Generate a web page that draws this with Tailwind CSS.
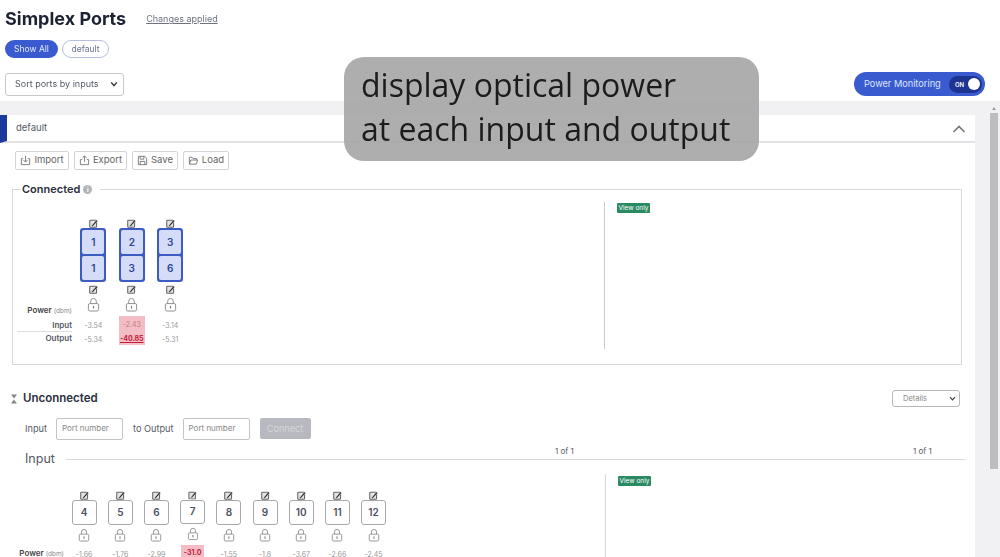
<!DOCTYPE html>
<html lang="en">
<head>
    <meta charset="UTF-8">
    <title>Simplex Ports</title>
    <script src="https://cdn.jsdelivr.net/npm/@tailwindcss/browser@4"></script>
</head>
<body class="bg-white overflow-hidden antialiased">
    <svg class="hidden">
        <symbol id="edit" viewBox="0 0 10 10">
            <rect x=".8" y="1.4" width="7.6" height="7.8" rx=".8" fill="#e4e4e4" stroke="#666" stroke-width="1.2"/>
            <path d="M3 7.200 L8.200 1 L9.700 2.300 L4.400 8 L2.800 8.300 Z" fill="#333" stroke="#fff" stroke-width=".4"/>
        </symbol>
        <symbol id="lock" viewBox="0 0 14 16">
            <path d="M4 7V4.500a3 3 0 0 1 6 0V7" fill="none" stroke="#888" stroke-width="1"/>
            <rect x="1.500" y="7" width="11" height="8" rx="1.500" fill="#fff" stroke="#888" stroke-width="1"/>
            <rect x="6.400" y="9.600" width="1.200" height="2.800" fill="#777"/>
        </symbol>
    </svg>

    <div class="relative w-[1000px] h-[557px] overflow-hidden flex flex-col font-['Inter',sans-serif] text-[#555a66] blur-[0.5px]">
        <!-- page header -->
        <header class="h-[101px] shrink-0 pl-[5px] pr-[15px]">
            <div class="flex items-center gap-5 pt-[4px] pb-[6px] h-[40px]">
                <h1 class="text-[18px] leading-[24px] font-bold text-[#1d2233]">Simplex Ports</h1>
                <a class="text-[9px] underline text-[#6c7282]">Changes applied</a>
            </div>
            <div class="flex gap-[4px] h-[18px]">
                <span class="w-[53px] rounded-full bg-[#3a5bd0] text-[#e4e9fb] text-[8.500px] flex items-center justify-center">Show All</span>
                <span class="w-[47px] rounded-full border border-[#b4bde0] text-[#6a7290] text-[8.500px] flex items-center justify-center">default</span>
            </div>
            <div class="flex items-center justify-between mt-[14px]">
                <div class="w-[119px] h-[23px] border border-[#c8c8cc] rounded-[3px] flex items-center justify-between pl-[9px] pr-[5px] text-[9px]">
                    Sort ports by inputs
                    <svg class="w-[8px] h-[8px]" viewBox="0 0 10 10"><path d="M1.500 3 L5 7 L8.500 3" fill="none" stroke="#333" stroke-width="1.800"/></svg>
                </div>
                <div class="w-[131px] h-[24px] rounded-full bg-[#3a5bd0] flex items-center justify-between pl-[10px] pr-[3px] text-[9.200px] text-[#dfe5fa]">
                    Power Monitoring
                    <span class="w-[33px] h-[17px] rounded-full bg-[#1d3590] flex items-center justify-between pl-[6px] pr-[2px] text-[6px] font-semibold text-white">ON<span class="w-[12px] h-[12px] rounded-full bg-white"></span></span>
                </div>
            </div>
        </header>

        <div class="flex-1 flex bg-[#f1f1f4] pt-[14px] min-h-0">
            <main class="w-[975px] shrink-0 bg-white">
                <div class="h-[28px] flex items-center justify-between border-b-2 border-[#e2e2e6] border-l-[7px] border-l-[#1c3a9e] pl-[9px] pr-[9px] pt-[1px] text-[9.500px]">
                    default
                    <svg class="w-[14px] h-[14px]" viewBox="0 0 14 14"><path d="M1.500 10 L7 4.500 L12.500 10" fill="none" stroke="#777" stroke-width="1.600"/></svg>
                </div>

                <div class="flex gap-[5px] pl-[15px] pt-[8px] text-[9.500px] text-[#666]">
                    <button class="w-[54px] h-[19px] border border-[#d4d4d8] rounded-[2px] flex items-center justify-center gap-[3px]">
                        <svg class="w-[11px] h-[11px]" viewBox="0 0 12 12" fill="none" stroke="#777"><path d="M6 1v6.500M3.800 5.500 6 7.800l2.200-2.300M3.500 4H1.500v6.500h9V4H8.500"/></svg>Import
                    </button>
                    <button class="w-[53px] h-[19px] border border-[#d4d4d8] rounded-[2px] flex items-center justify-center gap-[3px]">
                        <svg class="w-[11px] h-[11px]" viewBox="0 0 12 12" fill="none" stroke="#777"><path d="M6 7.500V1M3.800 3.200 6 1l2.200 2.200M3.500 5H1.500v5.500h9V5H8.500"/></svg>Export
                    </button>
                    <button class="w-[46px] h-[19px] border border-[#d4d4d8] rounded-[2px] flex items-center justify-center gap-[3px]">
                        <svg class="w-[11px] h-[11px]" viewBox="0 0 12 12" fill="none" stroke="#777"><path d="M1.500 1.500h7l2 2v7h-9zM3.500 1.500v3h4v-3M3.500 10.500v-3.500h5v3.500"/></svg>Save
                    </button>
                    <button class="w-[46px] h-[19px] border border-[#d4d4d8] rounded-[2px] flex items-center justify-center gap-[3px]">
                        <svg class="w-[11px] h-[11px]" viewBox="0 0 12 12" fill="none" stroke="#777"><path d="M1.500 10V2.500h3l1 1.500h4v1.500M1.500 10h7.500l1.500-4.500H3z"/></svg>Load
                    </button>
                </div>

                <!-- connected ports -->
                <fieldset class="ml-[12px] mt-[11px] w-[950px] h-[184px] border border-[#d8d8dc] flex">
                    <legend class="ml-[8px] px-[1px] pr-[8px] flex items-center gap-[3px] text-[11px] leading-[16px] font-semibold text-[#2a2f3d]">
                        Connected
                        <span class="w-[9px] h-[9px] rounded-full bg-[#b4b4b8] text-white text-[6px] leading-[9px] text-center font-bold">i</span>
                    </legend>
                    <div class="w-[592px] h-[147px] mt-[5px] border-r border-[#c8c8cc] flex text-[7px]">
                        <div class="w-[59px] shrink-0 pt-[101px] pl-[4px] text-right font-semibold text-[#555a66] text-[8px]">
                            <div class="h-[14px] leading-[14px] text-[#444]">Power <span class="font-normal text-[6.500px] text-[#888]">(dbm)</span></div>
                            <div class="h-[12px] mt-[2px] leading-[13px]">Input</div>
                            <div class="h-[14px] leading-[12px] border-t border-[#ddd]">Output</div>
                        </div>
                        <div class="w-[2px] shrink-0"></div>
                        <div class="w-[38.500px] flex flex-col items-center pt-[17px] text-[#999]">
                            <svg class="w-[9px] h-[9px]"><use href="#edit"/></svg>
                            <div class="w-[26px] h-[54px] flex flex-col rounded-[3px] border-2 border-[#3c5cc4] bg-[#3c5cc4] gap-[2px] text-[10px] font-semibold text-[#2c4596]">
                                <span class="flex-1 bg-[#d4dcf8] rounded-[2px] flex items-center justify-center">1</span>
                                <span class="flex-1 bg-[#d4dcf8] rounded-[2px] flex items-center justify-center">1</span>
                            </div>
                            <svg class="w-[9px] h-[9px] mt-[3px]"><use href="#edit"/></svg>
                            <svg class="w-[13px] h-[15px] mt-[3px]"><use href="#lock"/></svg>
                            <span class="h-[15px] mt-[6px] leading-[15px]">-3.54</span>
                            <span class="h-[13px] leading-[13px]">-5.34</span>
                        </div>
                        <div class="w-[38.500px] flex flex-col items-center pt-[17px] text-[#999]">
                            <svg class="w-[9px] h-[9px]"><use href="#edit"/></svg>
                            <div class="w-[26px] h-[54px] flex flex-col rounded-[3px] border-2 border-[#3c5cc4] bg-[#3c5cc4] gap-[2px] text-[10px] font-semibold text-[#2c4596]">
                                <span class="flex-1 bg-[#d4dcf8] rounded-[2px] flex items-center justify-center">2</span>
                                <span class="flex-1 bg-[#d4dcf8] rounded-[2px] flex items-center justify-center">3</span>
                            </div>
                            <svg class="w-[9px] h-[9px] mt-[3px]"><use href="#edit"/></svg>
                            <svg class="w-[13px] h-[15px] mt-[3px]"><use href="#lock"/></svg>
                            <div class="w-[26px] h-[29px] mt-[4px] bg-[#f4bcc4] flex flex-col items-center">
                                <span class="h-[16px] leading-[18px] text-[#c08088]">-2.43</span>
                                <span class="h-[13px] leading-[13px] font-bold underline text-[#c02040]">-40.85</span>
                            </div>
                        </div>
                        <div class="w-[38.500px] flex flex-col items-center pt-[17px] text-[#999]">
                            <svg class="w-[9px] h-[9px]"><use href="#edit"/></svg>
                            <div class="w-[26px] h-[54px] flex flex-col rounded-[3px] border-2 border-[#3c5cc4] bg-[#3c5cc4] gap-[2px] text-[10px] font-semibold text-[#2c4596]">
                                <span class="flex-1 bg-[#d4dcf8] rounded-[2px] flex items-center justify-center">3</span>
                                <span class="flex-1 bg-[#d4dcf8] rounded-[2px] flex items-center justify-center">6</span>
                            </div>
                            <svg class="w-[9px] h-[9px] mt-[3px]"><use href="#edit"/></svg>
                            <svg class="w-[13px] h-[15px] mt-[3px]"><use href="#lock"/></svg>
                            <span class="h-[15px] mt-[6px] leading-[15px]">-3.14</span>
                            <span class="h-[13px] leading-[13px]">-5.31</span>
                        </div>
                    </div>
                    <div class="pl-[12px] pt-[6px]">
                        <span class="block w-[33px] h-[10px] rounded-[1px] bg-[#2a8a62] text-white text-[6.500px] leading-[10px] text-center">View only</span>
                    </div>
                </fieldset>

                <!-- unconnected ports -->
                <div class="flex items-center justify-between h-[17px] mt-[25px] pl-[10px] pr-[15px]">
                    <div class="flex items-center gap-[5px] pt-[1px] text-[11.500px] font-semibold text-[#2a2f3d]">
                        <svg class="w-[8px] h-[10px]" viewBox="0 0 8 10"><path d="M1 .5h6L4 4.500zM1 9.500h6L4 5.500z" fill="#888"/></svg>
                        Unconnected
                    </div>
                    <div class="w-[68px] h-[17px] border border-[#b8b8bc] rounded-[3px] flex items-center justify-between pl-[10px] pr-[3px] text-[7.500px] text-[#888]">
                        Details
                        <svg class="w-[7px] h-[7px]" viewBox="0 0 10 10"><path d="M1.500 3 L5 7 L8.500 3" fill="none" stroke="#444" stroke-width="1.800"/></svg>
                    </div>
                </div>
                <div class="flex items-center h-[22px] mt-[11px] pl-[25px] text-[9.200px]">
                    Input
                    <div class="w-[67px] h-[22px] ml-[9px] border border-[#c4c4c8] rounded-[2px] pl-[5px] leading-[19px] text-[8px] text-[#888]">Port number</div>
                    <span class="ml-[10px]">to Output</span>
                    <div class="w-[67px] h-[22px] ml-[9px] border border-[#c4c4c8] rounded-[2px] pl-[5px] leading-[19px] text-[8px] text-[#888]">Port number</div>
                    <span class="w-[51px] h-[21px] ml-[10px] -mt-[1px] rounded-[2px] bg-[#b8b9c0] text-[#d4d5da] flex items-center justify-center">Connect</span>
                </div>
                <div class="relative flex items-center h-[20px] mt-[9px] pl-[25px] text-[12.500px]">
                    Input
                    <div class="ml-[11px] w-[899px] h-px bg-[#d8d8dc]"></div>
                    <span class="absolute left-[555px] -top-[3px] text-[8px] leading-[10px]">1 of 1</span>
                    <span class="absolute left-[913px] -top-[3px] text-[8px] leading-[10px]">1 of 1</span>
                </div>
                <div class="flex h-[90px] mt-[5px] text-[7px] text-[#999]">
                    <div class="w-[606px] border-r border-[#d8d8dc] flex">
                        <div class="w-[66px] shrink-0 pt-[73px] pr-[2px] text-right text-[8px] font-semibold text-[#444] leading-[12px]">Power <span class="font-normal text-[6.500px] text-[#888]">(dbm)</span></div>
                        <div class="w-[36.200px] flex flex-col items-center pt-[17px]">
                            <svg class="w-[9px] h-[9px]"><use href="#edit"/></svg>
                            <span class="w-[25px] h-[25px] border border-[#a8a8ac] rounded-[3px] flex items-center justify-center text-[10px] font-semibold text-[#4a5060]">4</span>
                            <svg class="w-[12px] h-[14px] mt-[3px]"><use href="#lock"/></svg>
                            <span class="h-[14px] mt-[6px] leading-[14px]">-1.66</span>
                        </div>
                        <div class="w-[36.200px] flex flex-col items-center pt-[17px]">
                            <svg class="w-[9px] h-[9px]"><use href="#edit"/></svg>
                            <span class="w-[25px] h-[25px] border border-[#a8a8ac] rounded-[3px] flex items-center justify-center text-[10px] font-semibold text-[#4a5060]">5</span>
                            <svg class="w-[12px] h-[14px] mt-[3px]"><use href="#lock"/></svg>
                            <span class="h-[14px] mt-[6px] leading-[14px]">-1.76</span>
                        </div>
                        <div class="w-[36.200px] flex flex-col items-center pt-[17px]">
                            <svg class="w-[9px] h-[9px]"><use href="#edit"/></svg>
                            <span class="w-[25px] h-[25px] border border-[#a8a8ac] rounded-[3px] flex items-center justify-center text-[10px] font-semibold text-[#4a5060]">6</span>
                            <svg class="w-[12px] h-[14px] mt-[3px]"><use href="#lock"/></svg>
                            <span class="h-[14px] mt-[6px] leading-[14px]">-2.99</span>
                        </div>
                        <div class="w-[36.200px] flex flex-col items-center pt-[17px]">
                            <svg class="w-[9px] h-[9px]"><use href="#edit"/></svg>
                            <span class="w-[25px] h-[25px] border border-[#a8a8ac] rounded-[3px] flex items-center justify-center text-[10px] font-semibold text-[#4a5060]">7</span>
                            <svg class="w-[12px] h-[14px] mt-[3px]"><use href="#lock"/></svg>
                            <span class="w-[23px] h-[20px] mt-[5px] bg-[#f4bcc4] text-center pt-[1px] leading-[14px] font-bold text-[#c02040]">-31.0</span>
                        </div>
                        <div class="w-[36.200px] flex flex-col items-center pt-[17px]">
                            <svg class="w-[9px] h-[9px]"><use href="#edit"/></svg>
                            <span class="w-[25px] h-[25px] border border-[#a8a8ac] rounded-[3px] flex items-center justify-center text-[10px] font-semibold text-[#4a5060]">8</span>
                            <svg class="w-[12px] h-[14px] mt-[3px]"><use href="#lock"/></svg>
                            <span class="h-[14px] mt-[6px] leading-[14px]">-1.55</span>
                        </div>
                        <div class="w-[36.200px] flex flex-col items-center pt-[17px]">
                            <svg class="w-[9px] h-[9px]"><use href="#edit"/></svg>
                            <span class="w-[25px] h-[25px] border border-[#a8a8ac] rounded-[3px] flex items-center justify-center text-[10px] font-semibold text-[#4a5060]">9</span>
                            <svg class="w-[12px] h-[14px] mt-[3px]"><use href="#lock"/></svg>
                            <span class="h-[14px] mt-[6px] leading-[14px]">-1.8</span>
                        </div>
                        <div class="w-[36.200px] flex flex-col items-center pt-[17px]">
                            <svg class="w-[9px] h-[9px]"><use href="#edit"/></svg>
                            <span class="w-[25px] h-[25px] border border-[#a8a8ac] rounded-[3px] flex items-center justify-center text-[10px] font-semibold text-[#4a5060]">10</span>
                            <svg class="w-[12px] h-[14px] mt-[3px]"><use href="#lock"/></svg>
                            <span class="h-[14px] mt-[6px] leading-[14px]">-3.67</span>
                        </div>
                        <div class="w-[36.200px] flex flex-col items-center pt-[17px]">
                            <svg class="w-[9px] h-[9px]"><use href="#edit"/></svg>
                            <span class="w-[25px] h-[25px] border border-[#a8a8ac] rounded-[3px] flex items-center justify-center text-[10px] font-semibold text-[#4a5060]">11</span>
                            <svg class="w-[12px] h-[14px] mt-[3px]"><use href="#lock"/></svg>
                            <span class="h-[14px] mt-[6px] leading-[14px]">-2.66</span>
                        </div>
                        <div class="w-[36.200px] flex flex-col items-center pt-[17px]">
                            <svg class="w-[9px] h-[9px]"><use href="#edit"/></svg>
                            <span class="w-[25px] h-[25px] border border-[#a8a8ac] rounded-[3px] flex items-center justify-center text-[10px] font-semibold text-[#4a5060]">12</span>
                            <svg class="w-[12px] h-[14px] mt-[3px]"><use href="#lock"/></svg>
                            <span class="h-[14px] mt-[6px] leading-[14px]">-2.45</span>
                        </div>
                    </div>
                    <div class="pl-[12px] pt-[2px]">
                        <span class="block w-[33px] h-[10px] rounded-[1px] bg-[#2a8a62] text-white text-[6.500px] leading-[10px] text-center">View only</span>
                    </div>
                </div>
            </main>
            <!-- scrollbar gutter -->
            <div class="flex-1 flex flex-col pl-[15px] pr-[2px] -mt-[9px]">
                <svg class="w-[8px] h-[5px] mb-[2px]" viewBox="0 0 8 5"><path d="M4 1 L6 4 H2 Z" fill="#999"/></svg>
                <div class="w-[8px] h-[356px] bg-[#bdbdbd]"></div>
            </div>
        </div>
    </div>

    <!-- video caption over the page -->
    <div class="absolute left-[344px] top-[57px] w-[415px] h-[104px] rounded-[20px] bg-[#a5a5a5]/90 pl-[17px] pt-[6px] font-['Open_Sans',sans-serif] text-[32px] leading-[44px] text-[#1c1c1c] antialiased">
        display optical power<br>at each input and output
    </div>
</body>
</html>
